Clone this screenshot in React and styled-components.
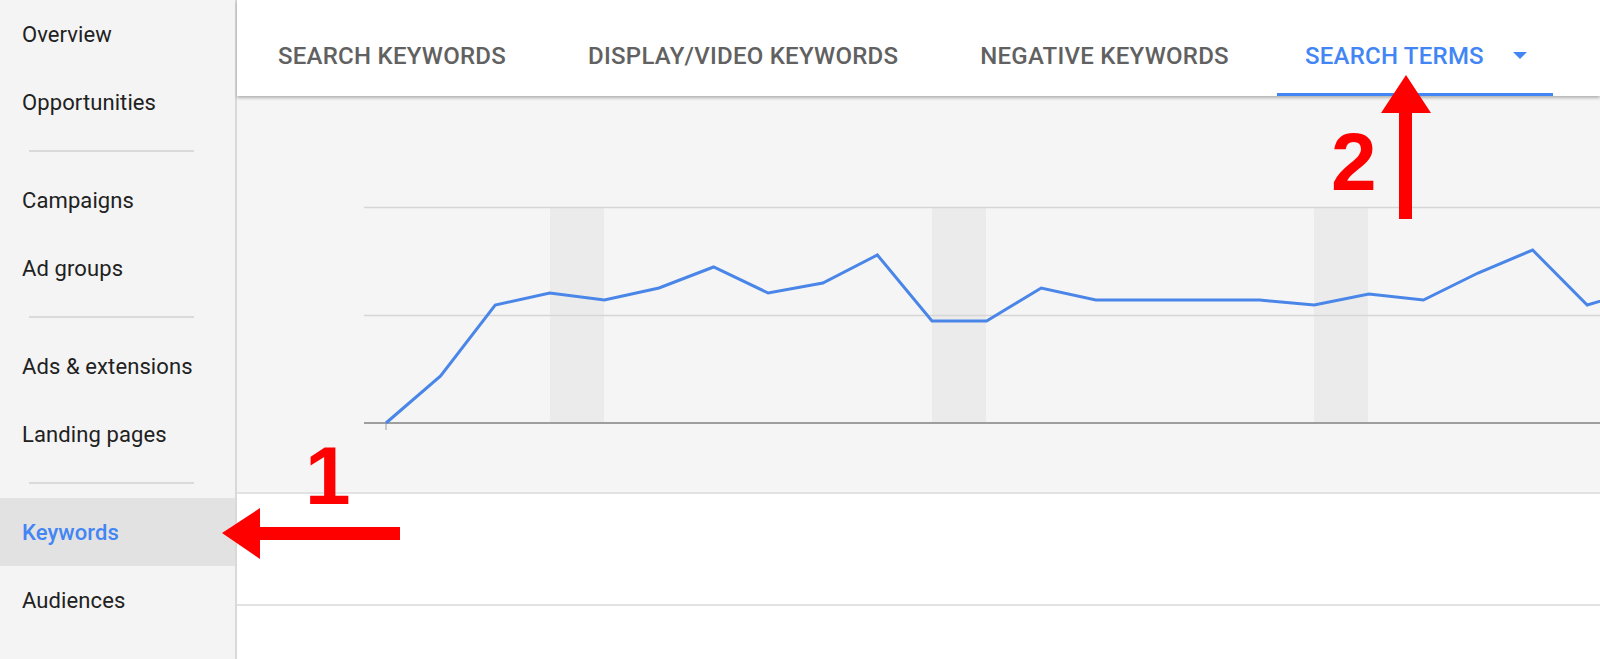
import React from "react";
import styled, { createGlobalStyle } from "styled-components";

const GlobalStyle = createGlobalStyle`
  html, body {
    margin: 0;
    padding: 0;
    background: #ffffff;
  }
  body {
    font-family: Roboto, "Noto Sans", "Liberation Sans", sans-serif;
  }
`;

const Page = styled.div`
  position: relative;
  display: grid;
  grid-template-columns: 237px 1fr;
  width: 1600px;
  height: 659px;
  overflow: hidden;
`;

const Sidebar = styled.nav`
  display: flex;
  flex-direction: column;
  background: #f4f4f4;
  border-right: 2px solid #d9d9d9;
`;

const NavItem = styled.div`
  display: flex;
  align-items: center;
  height: 68px;
  padding-left: 22px;
  font-size: 22px;
  letter-spacing: 0.1px;
  font-weight: ${(p) => (p.$active ? 500 : 400)};
  color: ${(p) => (p.$active ? "#4285f4" : "#212121")};
  background: ${(p) => (p.$active ? "#e2e2e2" : "transparent")};
`;

const NavDivider = styled.div`
  display: flex;
  align-items: center;
  height: 30px;
  padding: 0 41px 0 29px;

  &::after {
    content: "";
    flex: 1;
    height: 2px;
    background: #dadada;
  }
`;

const Main = styled.main`
  display: flex;
  flex-direction: column;
  min-width: 0;
`;

const TabBar = styled.div`
  position: relative;
  z-index: 1;
  display: flex;
  height: 96px;
  background: #ffffff;
  box-shadow: 0 2px 3px rgba(0, 0, 0, 0.28);
`;

const Tab = styled.div`
  display: flex;
  align-items: center;
  gap: 29px;
  padding: ${(p) => (p.$active ? "15px 26px 0 28px" : "15px 41px 0")};
  margin-left: ${(p) => (p.$active ? "7px" : "0")};
  font-size: 24px;
  font-weight: 500;
  letter-spacing: 0.25px;
  text-transform: uppercase;
  white-space: nowrap;
  color: ${(p) => (p.$active ? "#4285f4" : "#616161")};
  box-shadow: ${(p) => (p.$active ? "inset 0 -3px 0 #4285f4" : "none")};
`;

const Caret = styled.span`
  width: 0;
  height: 0;
  border-left: 7.5px solid transparent;
  border-right: 7.5px solid transparent;
  border-top: 7px solid #4285f4;
`;

const ChartArea = styled.section`
  height: 398px;
  padding: 104px 0 0 127px;
  box-sizing: border-box;
  background: #f5f5f5;
  border-bottom: 2px solid #e2e2e2;
`;

const ChartSvg = styled.svg`
  display: block;
  width: 1236px;
  height: 240px;
  overflow: hidden;
`;

const TableRow = styled.div`
  height: 110px;
  background: #ffffff;
  border-bottom: 2px solid #e2e2e2;
`;

const TableRest = styled.div`
  flex: 1;
  background: #ffffff;
`;

const Marker = styled.span`
  position: absolute;
  top: ${(p) => p.$top}px;
  left: ${(p) => p.$left}px;
  font-family: "Liberation Sans", Arial, sans-serif;
  font-weight: 700;
  font-size: 82px;
  line-height: 82px;
  color: #ff0000;
  z-index: 5;
`;

const Arrow = styled.svg`
  position: absolute;
  top: ${(p) => p.$top}px;
  left: ${(p) => p.$left}px;
  z-index: 5;
  overflow: visible;
`;

const NAV = [
  ["Overview", "Opportunities"],
  ["Campaigns", "Ad groups"],
  ["Ads & extensions", "Landing pages"],
  ["Keywords", "Audiences"],
];

const TABS = ["Search keywords", "Display/video keywords", "Negative keywords"];

const values = [423, 376, 305, 293, 300, 288, 267, 293, 283, 255, 321, 321, 288, 300, 300, 300, 300, 305, 294, 300, 273, 250, 305, 289];
const points = values
  .map((v, i) => `${(22 + i * 54.6).toFixed(1)},${v - 200}`)
  .join(" ");
const bands = [186, 568, 950];

function Chart() {
  return (
    <ChartSvg viewBox="0 0 1236 240">
      {bands.map((x) => (
        <rect key={x} x={x} y={7} width={54} height={216} fill="#ebebeb" />
      ))}
      <line x1="0" x2="1236" y1="7.5" y2="7.5" stroke="#d6d6d6" strokeWidth="1.5" />
      <line x1="0" x2="1236" y1="115.5" y2="115.5" stroke="#d6d6d6" strokeWidth="1.5" />
      <line x1="0" x2="1236" y1="223" y2="223" stroke="#9e9e9e" strokeWidth="2" />
      <line x1="22" x2="22" y1="223" y2="230" stroke="#9e9e9e" strokeWidth="1" />
      <polyline
        points={points}
        fill="none"
        stroke="#4a86e8"
        strokeWidth="3"
        strokeLinejoin="miter"
      />
    </ChartSvg>
  );
}

export default function App() {
  return (
    <>
      <GlobalStyle />
      <Page>
        <Sidebar>
          {NAV.map((group, gi) => (
            <React.Fragment key={gi}>
              {gi > 0 && <NavDivider />}
              {group.map((label) => (
                <NavItem key={label} $active={label === "Keywords"}>
                  {label}
                </NavItem>
              ))}
            </React.Fragment>
          ))}
        </Sidebar>
        <Main>
          <TabBar>
            {TABS.map((t) => (
              <Tab key={t}>{t}</Tab>
            ))}
            <Tab $active>
              Search terms
              <Caret />
            </Tab>
          </TabBar>
          <ChartArea>
            <Chart />
          </ChartArea>
          <TableRow />
          <TableRest />
        </Main>

        <Marker $top={435} $left={305}>1</Marker>
        <Arrow $top={508} $left={222} width="178" height="51" viewBox="0 0 178 51">
          <polygon points="0,25 38,0 38,19 178,19 178,32 38,32 38,51" fill="#ff0000" />
        </Arrow>

        <Marker $top={121} $left={1331}>2</Marker>
        <Arrow $top={75} $left={1381} width="50" height="144" viewBox="0 0 50 144">
          <polygon points="25,0 50,38 31,38 31,144 18,144 18,38 0,38" fill="#ff0000" />
        </Arrow>
      </Page>
    </>
  );
}
